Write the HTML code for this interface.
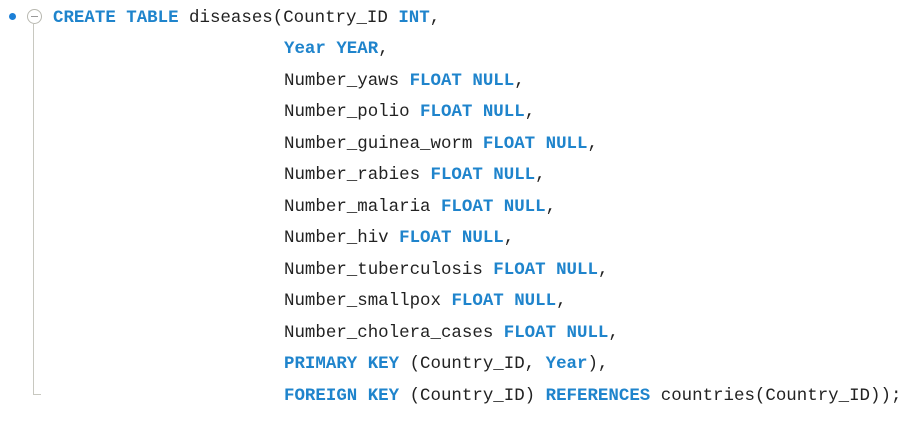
<!DOCTYPE html>
<html><head><style>
html,body{margin:0;padding:0;background:#fff;width:913px;height:423px;overflow:hidden}
.l{position:absolute;font-family:"Liberation Mono",monospace;font-size:17.45px;color:#222;white-space:pre;line-height:20px}
.k{color:#1f84cc;font-weight:bold}
</style></head><body>
<div style="position:absolute;left:9px;top:13px;width:7px;height:7px;border-radius:50%;background:#1c7fd6"></div>
<div style="position:absolute;left:27px;top:9px;width:13px;height:13px;border:1px solid #b8b8b0;border-radius:50%"></div>
<div style="position:absolute;left:31px;top:16px;width:7px;height:1px;background:#999"></div>
<div style="position:absolute;left:33px;top:24px;width:1px;height:370px;background:#c8c8c0"></div>
<div style="position:absolute;left:33px;top:394px;width:8px;height:1px;background:#c8c8c0"></div>
<div class="l" style="left:53px;top:8px"><span class="k">CREATE TABLE</span> diseases(Country_ID <span class="k">INT</span>,</div>
<div class="l" style="left:284px;top:39px"><span class="k">Year YEAR</span>,</div>
<div class="l" style="left:284px;top:71px">Number_yaws <span class="k">FLOAT NULL</span>,</div>
<div class="l" style="left:284px;top:102px">Number_polio <span class="k">FLOAT NULL</span>,</div>
<div class="l" style="left:284px;top:134px">Number_guinea_worm <span class="k">FLOAT NULL</span>,</div>
<div class="l" style="left:284px;top:165px">Number_rabies <span class="k">FLOAT NULL</span>,</div>
<div class="l" style="left:284px;top:197px">Number_malaria <span class="k">FLOAT NULL</span>,</div>
<div class="l" style="left:284px;top:228px">Number_hiv <span class="k">FLOAT NULL</span>,</div>
<div class="l" style="left:284px;top:260px">Number_tuberculosis <span class="k">FLOAT NULL</span>,</div>
<div class="l" style="left:284px;top:291px">Number_smallpox <span class="k">FLOAT NULL</span>,</div>
<div class="l" style="left:284px;top:323px">Number_cholera_cases <span class="k">FLOAT NULL</span>,</div>
<div class="l" style="left:284px;top:354px"><span class="k">PRIMARY KEY</span> (Country_ID, <span class="k">Year</span>),</div>
<div class="l" style="left:284px;top:386px"><span class="k">FOREIGN KEY</span> (Country_ID) <span class="k">REFERENCES</span> countries(Country_ID));</div>
</body></html>
